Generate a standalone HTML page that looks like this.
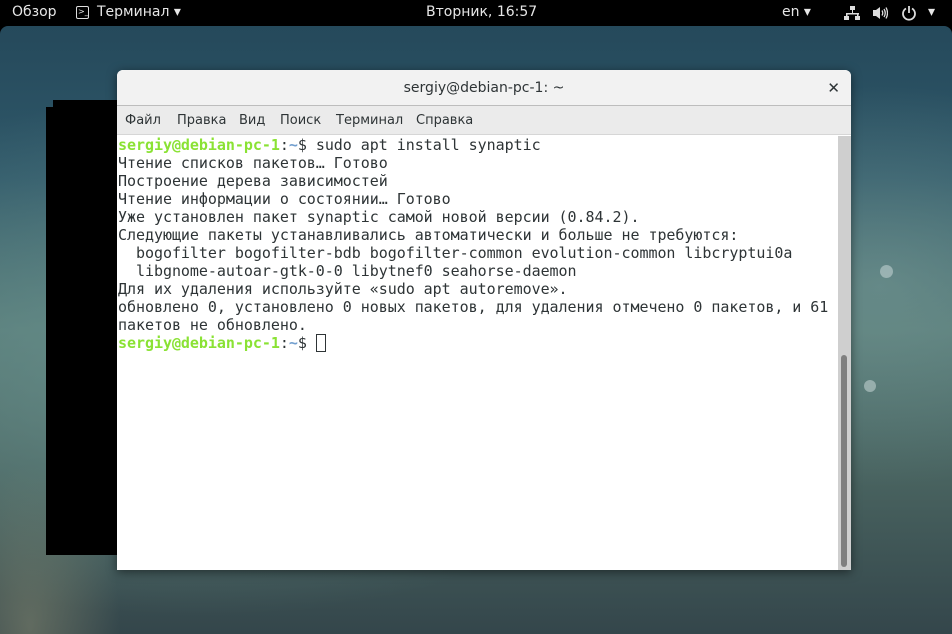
<!DOCTYPE html>
<html><head><meta charset="utf-8"><style>
*{margin:0;padding:0;box-sizing:border-box}
body{width:952px;height:634px;overflow:hidden;background:#000;position:relative;font-family:"DejaVu Sans","Liberation Sans",sans-serif}
#top{position:absolute;left:0;top:0;width:952px;height:26px;background:#000;color:#e6e6e6;font-size:14px}
#top span{position:absolute;top:4px}
#desk{position:absolute;left:0;top:26px;width:952px;height:608px;border-radius:8px 8px 0 0;overflow:hidden;
background:
radial-gradient(ellipse 90px 160px at 30px 600px,rgba(150,150,120,.45),transparent),
radial-gradient(ellipse 500px 260px at 200px 330px,rgba(110,150,145,.75),transparent),
radial-gradient(ellipse 300px 200px at 880px 260px,rgba(120,155,150,.6),transparent),
linear-gradient(#25495b 0%,#2f5869 25%,#537775 50%,#48625f 75%,#34464b 100%);}
.dot{position:absolute;border-radius:50%;background:rgba(200,215,215,.55)}
#blk{position:absolute;left:46px;top:107px;width:72px;height:448px;background:#000}
#blk2{position:absolute;left:53px;top:100px;width:65px;height:10px;background:#000}
#win{position:absolute;left:117px;top:70px;width:734px;height:500px;background:#fff;border-radius:6px 6px 0 0;box-shadow:0 2px 10px rgba(0,0,0,.5);overflow:hidden}
#title{height:36px;background:#f2f2f2;border-bottom:1px solid #bdbdbd;text-align:center;font-size:14px;line-height:36px;color:#2e3436}
#close{position:absolute;right:11px;top:0;line-height:36px;font-size:15px;font-weight:bold;color:#2e3436}
#menu{height:29px;background:#ebebeb;border-bottom:1px solid #d6d6d6;font-size:13px;color:#2e3436;line-height:29px;padding-left:8px;word-spacing:0}
#menu span{position:absolute;top:36px}
#term{position:absolute;left:1px;top:66px;font-family:"DejaVu Sans Mono","Liberation Mono",monospace;font-size:15px;line-height:18px;color:#2e3436;white-space:pre;letter-spacing:-0.04px}
.g{color:#8ae234;font-weight:bold}.b{color:#729fcf;font-weight:bold}
.cur{display:inline-block;width:10px;height:18px;border:1px solid #2e3436;vertical-align:top}
#sb{position:absolute;right:0;top:66px;width:13px;height:434px;background:#cfcfcf}
#th{position:absolute;left:3px;top:219px;width:6px;height:212px;background:#7f7f7f;border-radius:3px}
</style></head><body>
<div id="top">
<span style="left:12px">Обзор</span>
<span style="left:76px;top:6px;width:13px;height:13px;border:1.5px solid #ddd;border-radius:2px;font-size:8px;line-height:9px;text-align:left;padding-left:1px">&gt;_</span>
<span style="left:97px">Терминал ▾</span>
<span style="left:426px">Вторник, 16:57</span>
<span style="left:782px">en ▾</span>
<svg style="position:absolute;left:844px;top:6px" width="16" height="15" viewBox="0 0 16 15" fill="#ddd"><rect x="6" y="0" width="5" height="4"/><rect x="8" y="4" width="1" height="3"/><rect x="2" y="7" width="13" height="1.5"/><rect x="2" y="7" width="1.5" height="3"/><rect x="13" y="7" width="1.5" height="3"/><rect x="0" y="10" width="5" height="4"/><rect x="11" y="10" width="5" height="4"/></svg>
<svg style="position:absolute;left:872px;top:6px" width="16" height="14" viewBox="0 0 16 14"><path d="M1 4h3l4-3v12l-4-3H1z" fill="#ddd"/><path d="M10 4.5q1.5 2.5 0 5M12 3q2.5 4 0 8M14 1.5q3 5.5 0 11" stroke="#ddd" stroke-width="1.3" fill="none"/></svg>
<svg style="position:absolute;left:901px;top:5px" width="16" height="16" viewBox="0 0 16 16"><path d="M5 3.5a6 6 0 1 0 6 0" stroke="#ddd" stroke-width="1.8" fill="none"/><path d="M8 1v7" stroke="#ddd" stroke-width="1.8"/></svg>
<span style="left:928px">▾</span>
</div>
<div id="desk">
<div class="dot" style="left:880px;top:239px;width:13px;height:13px"></div>
<div class="dot" style="left:864px;top:354px;width:12px;height:12px"></div>
</div>
<div id="blk2"></div><div id="blk"></div>
<div id="win">
<div id="title">sergiy@debian-pc-1: ~</div><div id="close">✕</div>
<div id="menu"><span style="left:8px">Файл</span><span style="left:60px">Правка</span><span style="left:122px">Вид</span><span style="left:163px">Поиск</span><span style="left:219px">Терминал</span><span style="left:299px">Справка</span></div>
<div id="term"><span class="g">sergiy@debian-pc-1</span>:<span class="b">~</span>$ sudo apt install synaptic
Чтение списков пакетов… Готово
Построение дерева зависимостей
Чтение информации о состоянии… Готово
Уже установлен пакет synaptic самой новой версии (0.84.2).
Следующие пакеты устанавливались автоматически и больше не требуются:
  bogofilter bogofilter-bdb bogofilter-common evolution-common libcryptui0a
  libgnome-autoar-gtk-0-0 libytnef0 seahorse-daemon
Для их удаления используйте «sudo apt autoremove».
обновлено 0, установлено 0 новых пакетов, для удаления отмечено 0 пакетов, и 61
пакетов не обновлено.
<span class="g">sergiy@debian-pc-1</span>:<span class="b">~</span>$ <span class="cur"></span></div>
<div id="sb"><div id="th"></div></div>
</div>
</body></html>
